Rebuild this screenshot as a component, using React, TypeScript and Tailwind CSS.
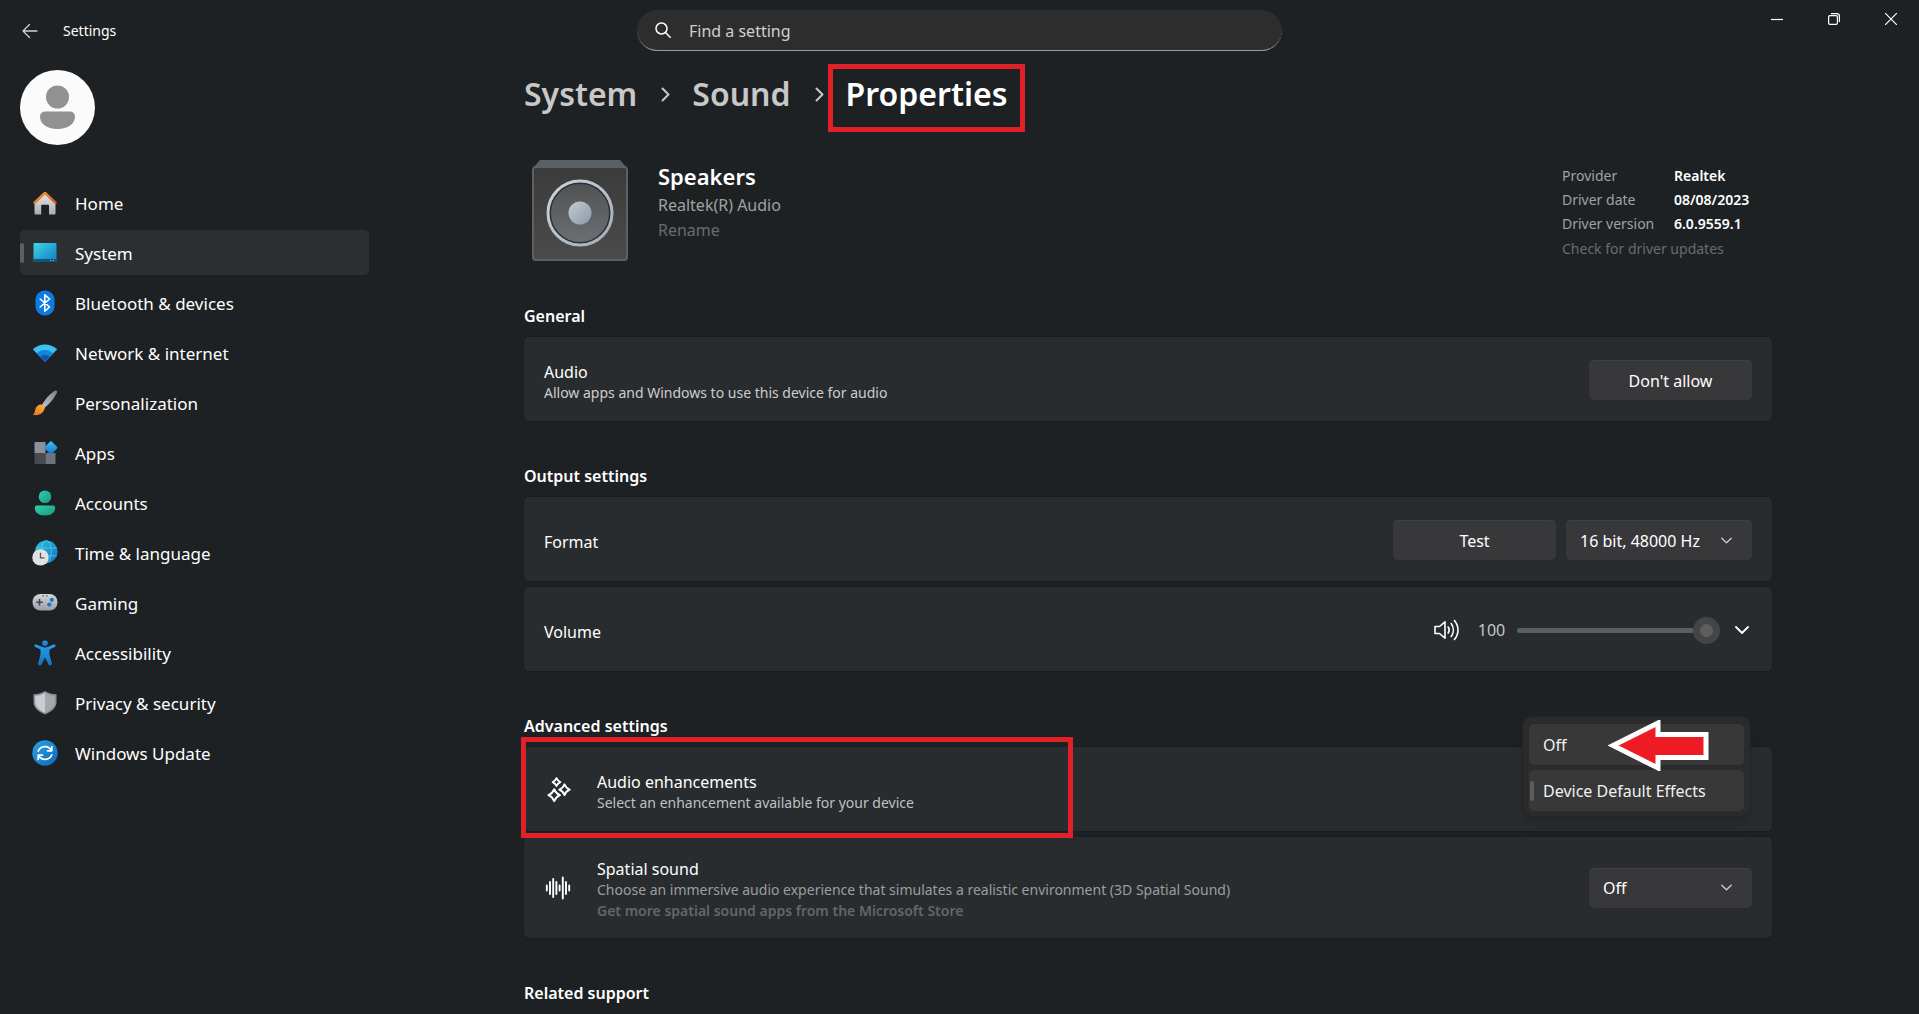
import React, { useState } from "react";

const HomeIcon = () => (
    <svg className="w-6 h-6" viewBox="0 0 24 24" aria-hidden="true">
        <defs>
            <linearGradient id="homeWall" x1="0" y1="0" x2="0" y2="1"><stop offset="0" stopColor="#e8e8ea" /><stop offset="1" stopColor="#a9abb0" /></linearGradient>
            <linearGradient id="homeRoof" x1="0" y1="0" x2="1" y2="1"><stop offset="0" stopColor="#f0a13c" /><stop offset="1" stopColor="#cf5a26" /></linearGradient>
        </defs>
        <path d="M1.5 11 12 2l10.500 9v11.500a1 1 0 0 1-1 1H16V14.500a.8.8 0 0 0-.8-.8H9a.8.8 0 0 0-.8.8v9H2.500a1 1 0 0 1-1-1z" fill="url(#homeWall)" />
        <path d="M1.600 11.600 12 2l10.400 9.600" fill="none" stroke="url(#homeRoof)" strokeWidth="2.600" strokeLinecap="round" strokeLinejoin="round" />
    </svg>
);

const SystemIcon = () => (
    <svg className="w-6 h-6" viewBox="0 0 24 24" aria-hidden="true">
        <defs><linearGradient id="sysBg" x1="0" y1="0" x2="1" y2="1"><stop offset="0" stopColor="#3ed6e4" /><stop offset="1" stopColor="#1478c8" /></linearGradient></defs>
        <rect x="0.500" y="2" width="23" height="19" rx="1" fill="url(#sysBg)" />
        <path d="M.5 18h23v2a1 1 0 0 1-1 1h-21a1 1 0 0 1-1-1z" fill="#0c5876" />
        <path d="M17.500 19.500h1M20 19.500h1" stroke="#6fd0f0" />
    </svg>
);

const BluetoothIcon = () => (
    <svg className="w-[26px] h-[26px]" viewBox="0 0 26 26" aria-hidden="true">
        <rect x="3.500" y="0.500" width="19" height="25" rx="9" fill="#0d7be6" />
        <path d="m8.200 9 9.400 8-4.800 4.200V4.800L17.600 9l-9.400 8" fill="none" stroke="#fff" strokeWidth="1.600" strokeLinejoin="round" strokeLinecap="round" />
    </svg>
);

const NetworkIcon = () => (
    <svg className="w-[26px] h-[26px]" viewBox="0 0 26 26" aria-hidden="true">
        <path d="M13 22 .8 9.300C7.800 2.900 18.200 2.900 25.200 9.300z" fill="#3dc0f4" />
        <path d="M13 22 4.800 13.400c4.700-4.500 11.700-4.500 16.400 0z" fill="#1683dc" />
        <path d="m13 22-4.800-5c2.800-2.600 6.800-2.600 9.600 0z" fill="#0f55a8" />
    </svg>
);

const BrushIcon = () => (
    <svg className="w-[26px] h-[26px]" viewBox="0 0 26 26" aria-hidden="true">
        <defs>
            <linearGradient id="brushHandle" x1="1" y1="0" x2="0" y2="1"><stop offset="0" stopColor="#7b8088" /><stop offset="1" stopColor="#c3c6cb" /></linearGradient>
            <linearGradient id="brushTip" x1="1" y1="0" x2="0" y2="1"><stop offset="0" stopColor="#ffb43c" /><stop offset="1" stopColor="#e8701c" /></linearGradient>
        </defs>
        <path d="M10 15C13 9 18.500 3.300 23 .7c1.600-.7 2.600.6 2 1.900C22.500 8 17.500 14 12.500 18z" fill="url(#brushHandle)" />
        <path d="M9.300 14.600c2.600 0 4.200 2.400 3 5.200C10.500 24 6 26 .8 24.800c2-1.200 1.800-2.800 2.400-5.200.8-3 3-5 6.100-5z" fill="url(#brushTip)" />
    </svg>
);

const AppsIcon = () => (
    <svg className="w-[26px] h-[26px]" viewBox="0 0 26 26" aria-hidden="true">
        <defs><linearGradient id="appsTile" x1="0" y1="0" x2="1" y2="1"><stop offset="0" stopColor="#42c4f0" /><stop offset="1" stopColor="#1272c8" /></linearGradient></defs>
        <path d="M3.500 2H13.500V13H2.500V3a1 1 0 0 1 1-1z" fill="#8b929c" />
        <path d="M2.500 13h11v11h-10a1 1 0 0 1-1-1z" fill="#474b50" />
        <path d="M13.500 13h10v10a1 1 0 0 1-1 1h-9z" fill="#6d747d" />
        <rect x="14" y="2.800" width="9.800" height="9.800" rx="1" transform="rotate(45 18.900 7.700)" fill="url(#appsTile)" />
    </svg>
);

const AccountsIcon = () => (
    <svg className="w-[26px] h-[26px]" viewBox="0 0 26 26" aria-hidden="true">
        <defs><linearGradient id="acc" x1="0" y1="0" x2="1" y2="1"><stop offset="0" stopColor="#2fd0b0" /><stop offset="1" stopColor="#17987f" /></linearGradient></defs>
        <circle cx="13" cy="6.800" r="6.300" fill="url(#acc)" />
        <path d="M5 15.500h16a2.200 2.200 0 0 1 2.200 2.200c0 5-4 7.800-10.200 7.800S2.800 22.700 2.800 17.700A2.200 2.200 0 0 1 5 15.500z" fill="url(#acc)" />
    </svg>
);

const TimeIcon = () => (
    <svg className="w-[26px] h-[26px]" viewBox="0 0 26 26" aria-hidden="true">
        <defs><linearGradient id="globe" x1="0" y1="0" x2="1" y2="1"><stop offset="0" stopColor="#30c4d8" /><stop offset="1" stopColor="#1170c4" /></linearGradient></defs>
        <circle cx="14.300" cy="11.800" r="11.300" fill="url(#globe)" />
        <g fill="none" stroke="#5fd4ea" strokeWidth="0.900" opacity="0.800">
            <ellipse cx="14.300" cy="11.800" rx="5" ry="11.300" />
            <path d="M4 8h20.600M4 15.800h20.600" />
        </g>
        <circle cx="8.500" cy="17.400" r="8.200" fill="#dfe1e4" />
        <path d="M8.500 12.800v5h4" fill="none" stroke="#55585c" strokeWidth="1.300" />
    </svg>
);

const GamingIcon = () => (
    <svg className="w-[26px] h-[26px]" viewBox="0 0 26 26" aria-hidden="true">
        <defs><linearGradient id="pad" x1="0" y1="0" x2="0" y2="1"><stop offset="0" stopColor="#d4d7dc" /><stop offset="1" stopColor="#9a9fa8" /></linearGradient></defs>
        <rect x="0.500" y="4" width="25" height="16.500" rx="8" fill="url(#pad)" />
        <path d="M7.500 9v6.500M4.200 12.200h6.600" stroke="#44484d" strokeWidth="1.600" />
        <path d="M10.600 5.800h1.300M14.200 5.800h1.300" stroke="#44484d" strokeWidth="1.200" />
        <circle cx="19.800" cy="9.800" r="2.100" fill="#1976cf" />
        <circle cx="17.300" cy="14.600" r="2.100" fill="#1976cf" />
    </svg>
);

const AccessibilityIcon = () => (
    <svg className="w-[26px] h-[26px]" viewBox="0 0 26 26" aria-hidden="true">
        <defs><linearGradient id="a11y" x1="0" y1="0" x2="0" y2="1"><stop offset="0" stopColor="#27a0e8" /><stop offset="1" stopColor="#1272c4" /></linearGradient></defs>
        <circle cx="13" cy="3.200" r="2.800" fill="url(#a11y)" />
        <path d="M4.300 4.500 9.800 6.800c2 .8 4.400.8 6.400 0l5.500-2.300c2-.6 2.600 1.900 1 2.600L17.500 9.500v5l2.300 8.800c.3 2.300-2.600 3-3.400 1L13 17.500l-3.400 6.800c-.8 2-3.700 1.300-3.400-1l2.300-8.800v-5L3.300 7.100c-1.600-.7-1-3.200 1-2.600z" fill="url(#a11y)" />
    </svg>
);

const ShieldIcon = () => (
    <svg className="w-[26px] h-[26px]" viewBox="0 0 26 26" aria-hidden="true">
        <path d="M13 1c3.500 2.400 7.300 3.200 11.500 3.200V12c0 5.500-4.500 9.500-11.500 12.500C6 21.500 1.500 17.500 1.500 12V4.200C5.700 4.200 9.500 3.400 13 1z" fill="#8d9198" />
        <path d="M13 2.800c-3 2-6 2.800-9.800 3V12c0 4.600 3.600 8 9.800 10.700z" fill="#c9ccd1" />
        <path d="M13 2.800c3 2 6 2.800 9.800 3V12c0 4.600-3.600 8-9.800 10.700z" fill="#a4a8ae" />
    </svg>
);

const UpdateIcon = () => (
    <svg className="w-[26px] h-[26px]" viewBox="0 0 26 26" aria-hidden="true">
        <defs><linearGradient id="upd" x1="0" y1="0" x2="1" y2="1"><stop offset="0" stopColor="#2aa4e8" /><stop offset="1" stopColor="#0f68b8" /></linearGradient></defs>
        <circle cx="13" cy="13" r="12.700" fill="url(#upd)" />
        <g fill="none" stroke="#fff" strokeWidth="1.700" strokeLinecap="round" strokeLinejoin="round">
            <path d="M6.200 11.200a7.200 7.200 0 0 1 13.300-.4M19.800 6.500v4.300h-4.300" />
            <path d="M19.800 14.800a7.200 7.200 0 0 1-13.300.4M6.200 19.500v-4.300h4.300" />
        </g>
    </svg>
);

const SpeakerBoxIcon = () => (
    <svg className="w-[96px] h-[102px] shrink-0" viewBox="0 0 96 102" aria-hidden="true">
        <defs>
            <linearGradient id="boxFront" x1="0" y1="0" x2="0" y2="1"><stop offset="0" stopColor="#3b3b3b" /><stop offset="1" stopColor="#4b4b4b" /></linearGradient>
            <linearGradient id="boxRing" x1="0" y1="0" x2="1" y2="1"><stop offset="0" stopColor="#cdd4db" /><stop offset="1" stopColor="#a3acb5" /></linearGradient>
            <linearGradient id="boxCone" x1="0" y1="0" x2="0" y2="1"><stop offset="0" stopColor="#505254" /><stop offset="1" stopColor="#6c6f72" /></linearGradient>
            <linearGradient id="boxDome" x1="0" y1="0" x2="1" y2="1"><stop offset="0" stopColor="#c3ccd5" /><stop offset="1" stopColor="#8b98a4" /></linearGradient>
        </defs>
        <path d="M8 0h80l7 8H1z" fill="#5b6067" />
        <rect x="1" y="7" width="94" height="93" rx="3" fill="url(#boxFront)" stroke="#5c6165" strokeWidth="2" />
        <circle cx="48" cy="53" r="30" fill="url(#boxCone)" stroke="#2b3038" strokeWidth="2" />
        <circle cx="48" cy="53" r="32" fill="none" stroke="url(#boxRing)" strokeWidth="3" />
        <circle cx="48" cy="53" r="11.500" fill="url(#boxDome)" />
    </svg>
);

const SparkleIcon = () => (
    <svg className="w-[26px] h-[26px] shrink-0" viewBox="0 0 26 26" fill="none" stroke="#fff" strokeWidth="1.900" strokeLinejoin="round" aria-hidden="true">
        <path d="M10.500 1.200c.8 2 1.600 2.900 3.800 3.900-2.200 1-3 1.900-3.800 3.900-.8-2-1.600-2.900-3.800-3.900 2.200-1 3-1.900 3.800-3.900z" />
        <path d="M18.500 7.300c1 2.800 2.300 4.200 5.200 5.400-2.900 1.200-4.200 2.600-5.200 5.400-1-2.800-2.300-4.200-5.200-5.400 2.900-1.200 4.200-2.600 5.200-5.400z" />
        <path d="M8.200 12.200c1.100 3 2.600 4.700 5.800 6-3.200 1.300-4.700 3-5.800 6-1.100-3-2.600-4.700-5.800-6 3.200-1.300 4.700-3 5.800-6z" />
    </svg>
);

const WaveIcon = () => (
    <svg className="w-[26px] h-[26px] shrink-0" viewBox="0 0 26 26" fill="none" stroke="#fff" strokeWidth="1.900" strokeLinecap="round" aria-hidden="true">
        <path d="M1.800 10.500v5M5 7v12M8.200 4v18M11.400 7v12M14.600 10.500v5M17.800 2.500v21M21 7v12M24.200 10.500v5" />
    </svg>
);

const VolumeIcon = () => (
    <svg className="w-[26px] h-[22px]" viewBox="0 0 26 22" fill="none" stroke="#fff" strokeWidth="1.600" strokeLinecap="round" strokeLinejoin="round" aria-hidden="true">
        <path d="M1 7.500v7h4.500L11 19.200V2.800L5.500 7.500z" />
        <path d="M14.200 8c1.200 1.800 1.200 4.200 0 6M17.200 4.500c2.800 3.900 2.800 9.100 0 13M20.400 1.500c4.800 5.600 4.800 13.400 0 19" />
    </svg>
);

const Chevron = ({ className, color }: { className: string; color: string }) => (
    <svg className={className} viewBox="0 0 14 8" fill="none" stroke={color} strokeWidth="1.800" strokeLinecap="round" strokeLinejoin="round" aria-hidden="true">
        <path d="m1 1 6 6 6-6" />
    </svg>
);

const CrumbArrow = () => (
    <svg className="w-[9px] h-[15px] shrink-0" viewBox="0 0 9 15" fill="none" stroke="#c8c8c8" strokeWidth="2" strokeLinecap="round" strokeLinejoin="round" aria-hidden="true">
        <path d="m1.500 1.500 6 6-6 6" />
    </svg>
);

const navItems = [
    { name: "Home", icon: <HomeIcon /> },
    { name: "System", icon: <SystemIcon /> },
    { name: "Bluetooth & devices", icon: <BluetoothIcon /> },
    { name: "Network & internet", icon: <NetworkIcon /> },
    { name: "Personalization", icon: <BrushIcon /> },
    { name: "Apps", icon: <AppsIcon /> },
    { name: "Accounts", icon: <AccountsIcon /> },
    { name: "Time & language", icon: <TimeIcon /> },
    { name: "Gaming", icon: <GamingIcon /> },
    { name: "Accessibility", icon: <AccessibilityIcon /> },
    { name: "Privacy & security", icon: <ShieldIcon /> },
    { name: "Windows Update", icon: <UpdateIcon /> },
];

const driverInfo = [
    ["Provider", "Realtek"],
    ["Driver date", "08/08/2023"],
    ["Driver version", "6.0.9559.1"],
];

const effects = ["Off", "Device Default Effects"];

const card = "relative flex items-center px-5 rounded-[5px] bg-[#292c2e] shadow-[0_0_0_1px_#1b1e20]";
const control = "h-10 rounded-[5px] bg-[#38383b] border-t border-[#404044] text-base text-white";

const SectionTitle = ({ children }: { children: React.ReactNode }) => (
    <h2 className="text-base leading-6 font-semibold text-white">{children}</h2>
);

const Header = () => {
    const [searchQuery, setSearchQuery] = useState("");

    return (
        <header className="grid grid-cols-[1fr_minmax(0,645px)_1fr] items-center h-[61px]">
            <div className="flex items-center gap-[25px] pl-[22px]">
                <button aria-label="Back">
                    <svg className="w-4 h-4" viewBox="0 0 16 16" fill="none" stroke="#d0d0d0" strokeWidth="1.300" strokeLinecap="round" strokeLinejoin="round">
                        <path d="M15 8H1M7.500 1.500 1 8l6.500 6.500" />
                    </svg>
                </button>
                <span className="text-sm">Settings</span>
            </div>
            <div className="flex items-center gap-[18px] h-[41px] px-[18px] rounded-full bg-[#2d2d2d] border-b border-[#9a9a9a]">
                <svg className="w-4 h-4 shrink-0" viewBox="0 0 16 16" fill="none" stroke="#fff" strokeWidth="1.500" strokeLinecap="round" aria-hidden="true">
                    <circle cx="6.500" cy="6.500" r="5.500" />
                    <path d="m10.500 10.500 4.700 4.700" />
                </svg>
                <input
                    type="text"
                    aria-label="Find a setting"
                    className="w-full pt-[2px] bg-transparent text-base text-white placeholder:text-[#cfcfcf] outline-none"
                    placeholder="Find a setting"
                    value={searchQuery}
                    onChange={(e) => setSearchQuery(e.target.value)}
                />
            </div>
            <div className="flex self-start justify-end">
                <button aria-label="Minimize" className="flex items-center justify-center w-[57px] h-[38px]">
                    <svg className="w-3 h-3" viewBox="0 0 12 12" stroke="#fff" strokeWidth="1.200"><path d="M0 6.500h12" /></svg>
                </button>
                <button aria-label="Restore" className="flex items-center justify-center w-[57px] h-[38px]">
                    <svg className="w-3 h-3" viewBox="0 0 12 12" fill="none" stroke="#fff" strokeWidth="1.200">
                        <rect x="0.600" y="2.600" width="8.800" height="8.800" rx="1.300" />
                        <path d="M3 .6h5.800a2.600 2.600 0 0 1 2.600 2.600V9" />
                    </svg>
                </button>
                <button aria-label="Close" className="flex items-center justify-center w-[57px] h-[38px]">
                    <svg className="w-3 h-3" viewBox="0 0 12 12" stroke="#fff" strokeWidth="1.200"><path d="m0 0 12 12M12 0 0 12" /></svg>
                </button>
            </div>
        </header>
    );
};

const Sidebar = () => {
    const [active, setActive] = useState("System");

    return (
        <aside className="w-[377px] shrink-0 pl-5 pr-2 pt-[9px]">
            <svg className="w-[75px] h-[75px]" viewBox="0 0 75 75" role="img" aria-label="User account">
                <circle cx="37.500" cy="37.500" r="37.500" fill="#fbfbfb" />
                <circle cx="37.500" cy="27" r="11.500" fill="#919191" />
                <path d="M25 41.500h25a5 5 0 0 1 5 5C55 54 48 59 37.500 59S20 54 20 46.500a5 5 0 0 1 5-5z" fill="#919191" />
            </svg>
            <nav className="flex flex-col gap-[5px] mt-[35px]">
                {navItems.map((item) => (
                    <button
                        key={item.name}
                        onClick={() => setActive(item.name)}
                        className={`relative flex items-center gap-[17px] w-full h-[45px] pl-[11px] rounded-[5px] text-[17px] leading-6 text-white ${active === item.name ? "bg-[#2c2f31]" : ""}`}
                    >
                        {active === item.name && <span className="absolute left-0 w-1 h-5 rounded-sm bg-[#5f5f5f]" />}
                        <span className="flex justify-center w-[27px]">{item.icon}</span>
                        <span className="pt-[2px]">{item.name}</span>
                    </button>
                ))}
            </nav>
        </aside>
    );
};

const App = () => {
    const [volume, setVolume] = useState(100);
    const [effect, setEffect] = useState("Device Default Effects");

    return (
        <div className="min-h-screen bg-[#1e2123] text-white font-['Noto_Sans','Open_Sans',sans-serif]">
            <Header />
            <div className="flex">
                <Sidebar />
                <main className="flex-1 min-w-0">
                    <div className="w-full max-w-[1248px] mx-auto">
                        {/* Breadcrumb */}
                        <nav aria-label="Breadcrumb" className="flex items-center h-[66px] text-[32px] leading-10 font-semibold text-[#c8c8c8]">
                            <a href="#system">System</a>
                            <span className="flex justify-center w-[55px] pl-[2px]"><CrumbArrow /></span>
                            <a href="#sound">Sound</a>
                            <span className="flex justify-center w-[55px] pl-[2px]"><CrumbArrow /></span>
                            <h1 className="relative text-white">
                                Properties
                                <span className="absolute -left-[18px] -right-[18px] -top-[10px] -bottom-[18px] border-[5px] border-[#e02127]" />
                            </h1>
                        </nav>

                        {/* Device summary */}
                        <div className="flex items-start mt-[33px] pl-2">
                            <SpeakerBoxIcon />
                            <div className="flex flex-col items-start ml-[30px]">
                                <div className="mb-px text-[22px] leading-8 font-semibold">Speakers</div>
                                <div className="text-base leading-[25px] text-[#a0a2a3]">Realtek(R) Audio</div>
                                <button className="text-base leading-[25px] text-[#6a6c6d]">Rename</button>
                            </div>
                            <div className="ml-auto w-[210px] pt-1 text-sm leading-6">
                                <dl>
                                    {driverInfo.map(([label, value]) => (
                                        <div key={label} className="flex">
                                            <dt className="w-28 text-[#a0a2a3]">{label}</dt>
                                            <dd className="font-semibold">{value}</dd>
                                        </div>
                                    ))}
                                </dl>
                                <a href="#updates" className="block pt-px text-[#6a6c6d]">Check for driver updates</a>
                            </div>
                        </div>

                        <section className="mt-[42px]">
                            <SectionTitle>General</SectionTitle>
                            <div className={`${card} h-[84px] mt-[9px] pt-[2px]`}>
                                <div className="flex-1 pt-1">
                                    <div className="text-base leading-[22px]">Audio</div>
                                    <div className="text-sm leading-5 text-[#cdcdce]">Allow apps and Windows to use this device for audio</div>
                                </div>
                                <button className={`${control} w-[163px]`}>Don't allow</button>
                            </div>
                        </section>

                        <section className="mt-[43px]">
                            <SectionTitle>Output settings</SectionTitle>
                            <div className={`${card} h-[84px] mt-[9px] gap-[10px] pt-[2px]`}>
                                <label htmlFor="format" className="flex-1 pt-1 text-base">Format</label>
                                <button className={`${control} w-[163px]`}>Test</button>
                                <div className="relative flex items-center">
                                    <select id="format" className={`${control} w-[186px] appearance-none px-[14px]`}>
                                        <option>16 bit, 48000 Hz</option>
                                    </select>
                                    <Chevron className="absolute right-5 w-[11px] h-[7px] pointer-events-none" color="#c8c8c8" />
                                </div>
                            </div>
                            <div className={`${card} h-[84px] mt-[6px] pt-[2px]`}>
                                <label htmlFor="volume" className="flex-1 pt-1 text-base">Volume</label>
                                <VolumeIcon />
                                <span className="w-[57px] pl-[6px] text-center text-base text-[#c4c5c6]">{volume}</span>
                                <input
                                    id="volume"
                                    type="range"
                                    min="0"
                                    max="100"
                                    value={volume}
                                    onChange={(e) => setVolume(Number(e.target.value))}
                                    className="w-[203px] h-7 appearance-none bg-transparent [&::-webkit-slider-runnable-track]:h-[5px] [&::-webkit-slider-runnable-track]:rounded-full [&::-webkit-slider-runnable-track]:bg-[#5e5e5e] [&::-webkit-slider-thumb]:appearance-none [&::-webkit-slider-thumb]:w-[27px] [&::-webkit-slider-thumb]:h-[27px] [&::-webkit-slider-thumb]:-mt-[11px] [&::-webkit-slider-thumb]:rounded-full [&::-webkit-slider-thumb]:border-[7px] [&::-webkit-slider-thumb]:border-[#454545] [&::-webkit-slider-thumb]:bg-[#5e5e5e]"
                                />
                                <button aria-label="Show channels" className="ml-[15px]"><Chevron className="w-[14px] h-2 mr-[3px]" color="#fff" /></button>
                            </div>
                        </section>

                        <section className="mt-[43px]">
                            <SectionTitle>Advanced settings</SectionTitle>
                            <div className={`${card} z-10 h-[84px] mt-[9px] pt-[2px]`}>
                                <span className="flex w-[53px] pl-[2px]"><SparkleIcon /></span>
                                <div className="flex-1 pt-1">
                                    <div className="text-base leading-[22px]">Audio enhancements</div>
                                    <div className="text-sm leading-5 text-[#bfc0c1]">Select an enhancement available for your device</div>
                                </div>
                                <span className="absolute -left-[3px] -top-[10px] -bottom-[7px] w-[552px] border-[5px] border-[#e02127]" />

                                {/* open drop-down list */}
                                <ul role="listbox" aria-label="Audio enhancements" className="absolute right-[21px] -top-[31px] z-10 flex flex-col gap-[5px] w-[229px] h-[101px] pt-[7px] px-[6px] rounded-[10px] bg-[#2b2b2b] border border-[#232425] shadow-lg">
                                    {effects.map((name) => (
                                        <li key={name} role="option" aria-selected={effect === name}>
                                            <button
                                                onClick={() => setEffect(name)}
                                                className="relative flex items-center w-full h-[41px] pl-[14px] rounded-[5px] bg-[#383838] text-base text-[#f0f0f0]"
                                            >
                                                {effect === name && <span className="absolute left-px w-1 h-5 rounded-sm bg-[#5c5c5c]" />}
                                                {name}
                                            </button>
                                        </li>
                                    ))}
                                </ul>
                                <svg className="absolute right-[62px] -top-[27px] z-20 w-[102px] h-[51px] pointer-events-none" viewBox="0 0 102 51" aria-hidden="true">
                                    <path d="M5 25.500 50 3v11.500h48v23H50V48z" fill="#ed1c24" stroke="#fff" strokeWidth="5" />
                                </svg>
                            </div>
                            <div className={`${card} h-[101px] mt-[6px]`}>
                                <span className="flex w-[53px] pl-px"><WaveIcon /></span>
                                <div className="flex-1 pt-1">
                                    <label htmlFor="spatial" className="block text-base leading-[22px]">Spatial sound</label>
                                    <div className="text-sm leading-5 text-[#9c9d9f]">Choose an immersive audio experience that simulates a realistic environment (3D Spatial Sound)</div>
                                    <a href="#store" className="block text-sm leading-[22px] font-semibold text-[#646667]">Get more spatial sound apps from the Microsoft Store</a>
                                </div>
                                <div className="relative flex items-center">
                                    <select id="spatial" className={`${control} w-[163px] appearance-none px-[14px]`}>
                                        <option>Off</option>
                                    </select>
                                    <Chevron className="absolute right-5 w-[11px] h-[7px] pointer-events-none" color="#c8c8c8" />
                                </div>
                            </div>
                        </section>

                        <section className="mt-[43px]">
                            <SectionTitle>Related support</SectionTitle>
                        </section>
                    </div>
                </main>
            </div>
        </div>
    );
};

export default App;
